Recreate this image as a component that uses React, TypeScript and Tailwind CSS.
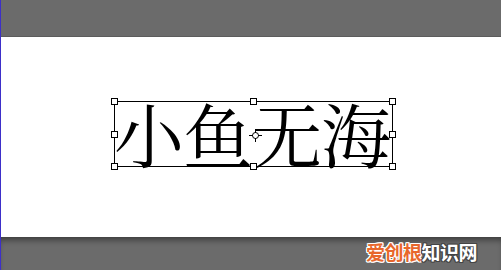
import React from 'react';

const handles = [
  'left-[-4px] top-[-4px]',
  'left-[135px] top-[-4px]',
  'right-[-4px] top-[-4px]',
  'left-[-4px] top-[29px]',
  'right-[-4px] top-[29px]',
  'left-[-4px] bottom-[-4px]',
  'left-[135px] bottom-[-4px]',
  'right-[-4px] bottom-[-4px]',
];

function Crosshair() {
  return (
    <svg className="absolute left-[134px] top-[27px]" width="13" height="13" viewBox="0 0 13 13">
      <circle cx="6.5" cy="6.5" r="3" fill="none" stroke="#000" strokeWidth="1" />
      <path d="M6.5 0v4M6.5 9v4M0 6.5h4M9 6.5h4" stroke="#000" strokeWidth="1" />
    </svg>
  );
}

export default function App() {
  return (
    <div className="flex h-[270px] w-[501px] flex-col border-l border-l-[#3d2fc9] bg-[#6b6b6b]">
      <div className="h-[37px] border-b border-b-[#5c5c5c] bg-[#6b6b6b]" />
      <div className="h-[200px] bg-white pl-[113px] pt-[64px]">
        <div className="relative h-[66px] w-[279px] border border-black">
          <div
            className="ml-[-1px] flex h-full items-center whitespace-nowrap pb-[2px] text-[70px] leading-none tracking-[-1px] text-black"
            style={{ fontFamily: '"Noto Serif CJK SC", "Noto Sans CJK SC", serif' }}
          >
            小鱼无海
          </div>
          {handles.map((h) => (
            <div key={h} className={`absolute h-[7px] w-[7px] border border-black bg-white ${h}`} />
          ))}
          <Crosshair />
        </div>
      </div>
      <div className="flex flex-1 justify-end bg-[#6b6b6b] pr-[24px] pt-[3px] shadow-[inset_0_6px_6px_-3px_rgba(0,0,0,0.45)]">
        <div
          className="text-[19px] font-bold leading-[24px] tracking-[-0.5px]"
          style={{ fontFamily: '"Noto Sans CJK SC", sans-serif' }}
        >
          <span className="text-[#e8672c] [text-shadow:1px_1px_0_#fff,-1px_-1px_0_#fff,1px_-1px_0_#fff,-1px_1px_0_#fff,0_1px_0_#fff,0_-1px_0_#fff,1px_0_0_#fff,-1px_0_0_#fff]">
            爱创根
          </span>
          <span className="text-white [text-shadow:1px_1px_0_#444,-1px_-1px_0_#444,1px_-1px_0_#444,-1px_1px_0_#444,0_1px_0_#444,0_-1px_0_#444,1px_0_0_#444,-1px_0_0_#444]">
            知识网
          </span>
        </div>
      </div>
    </div>
  );
}
